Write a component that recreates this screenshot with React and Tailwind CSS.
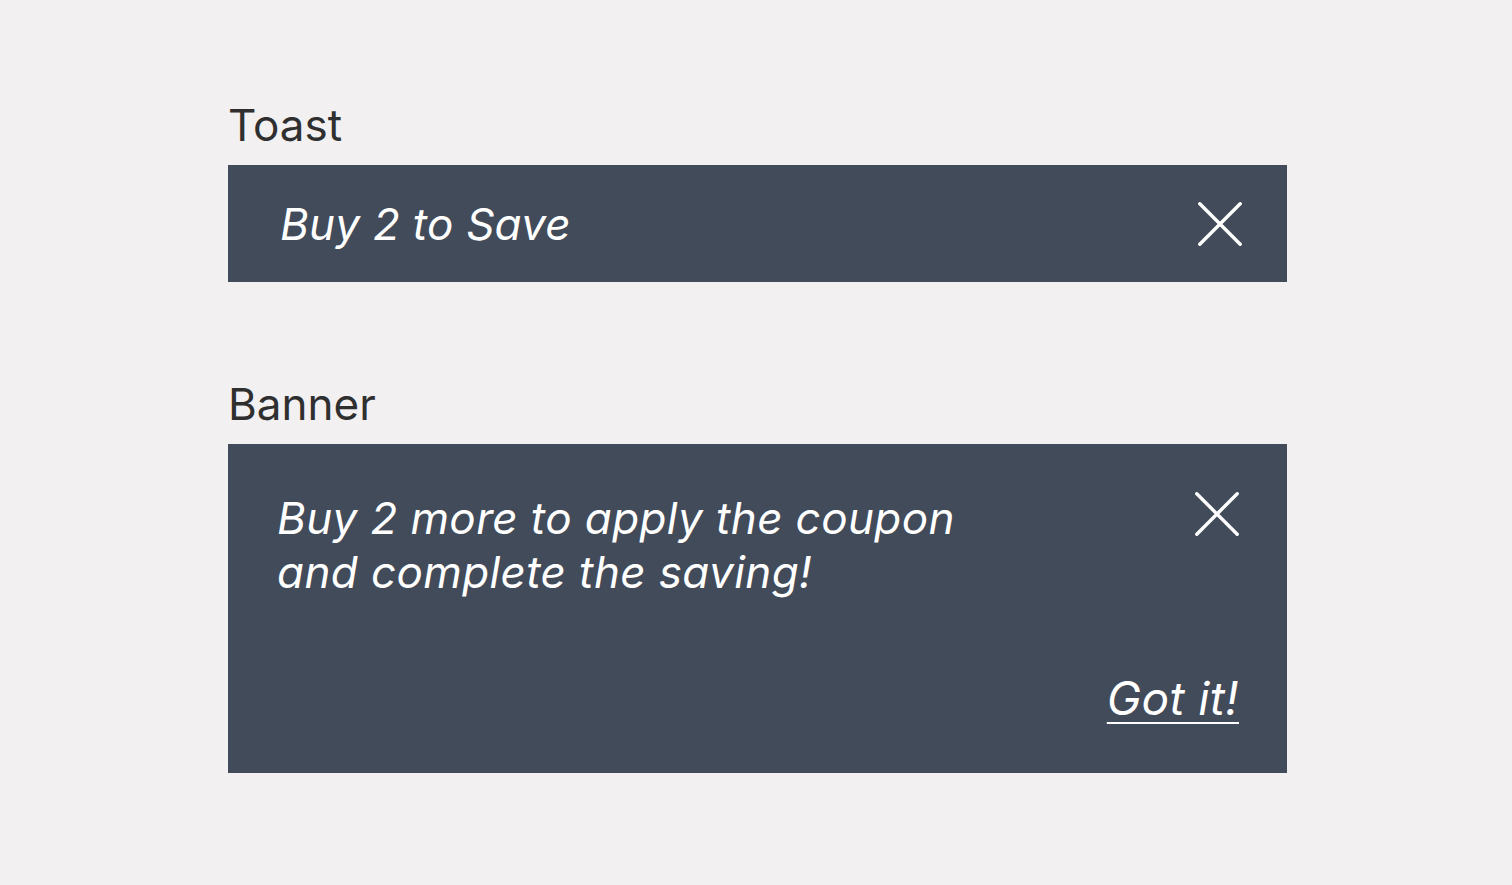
import React from "react";

function CloseIcon() {
  return (
    <svg width="44" height="44" viewBox="0 0 44 44" fill="none" stroke="currentColor" strokeWidth="3.4" strokeLinecap="round">
      <path d="M1.8 1.8L42.2 42.2M42.2 1.8L1.8 42.2" />
    </svg>
  );
}

export default function App() {
  return (
    <div className="min-h-[885px] w-full bg-[#f2f0f1] font-['Inter','Liberation_Sans',sans-serif]">
      <div className="ml-[228px] w-[1059px] pt-[98px]">
        <h2 className="text-[44px] leading-[54px] text-[#2f2f30]">Toast</h2>
        <div className="mt-[13px] h-[117px] bg-[#424b5a] flex items-center justify-between pl-[52px] pr-[45px] text-white">
          <p className="text-[44px] leading-[54px] italic tracking-[0.25px]">Buy 2 to Save</p>
          <button aria-label="Close" className="text-white">
            <CloseIcon />
          </button>
        </div>

        <h2 className="mt-[95px] text-[44px] leading-[54px] text-[#2f2f30]">Banner</h2>
        <div className="mt-[13px] h-[329px] bg-[#424b5a] flex flex-col justify-between pl-[49px] pr-[48px] pt-[47px] pb-[48px] text-white">
          <div className="flex items-start justify-between">
            <p className="text-[44px] leading-[54px] italic tracking-[0.38px]">
              Buy 2 more to apply the coupon
              <br />
              and complete the saving!
            </p>
            <button aria-label="Close" className="mt-[1px] text-white">
              <CloseIcon />
            </button>
          </div>
          <div className="flex justify-end">
            <a href="#" className="text-[46px] leading-[54px] italic tracking-[0.4px] underline decoration-2 underline-offset-[7px]">
              Got it!
            </a>
          </div>
        </div>
      </div>
    </div>
  );
}
